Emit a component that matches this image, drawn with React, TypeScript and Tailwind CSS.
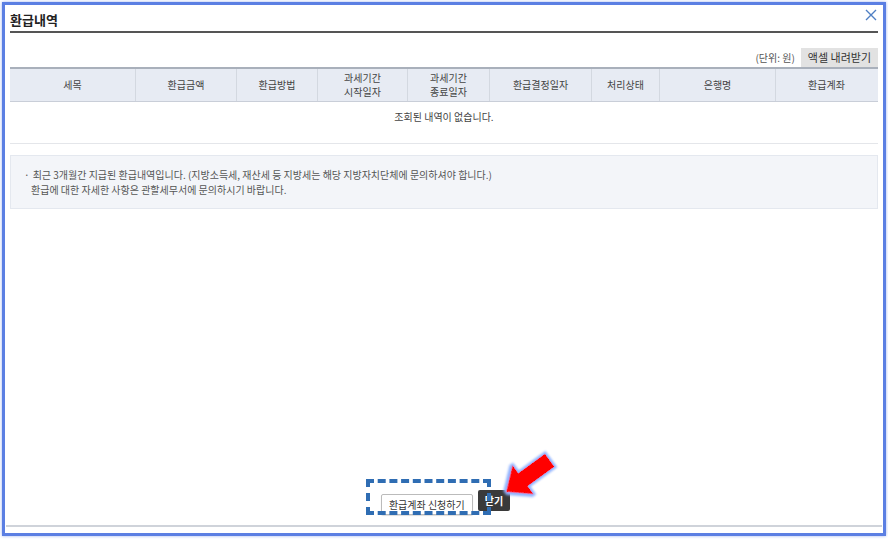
import React from 'react';

const columns: { label: string[]; width: string }[] = [
  { label: ['세목'], width: 'w-[126px]' },
  { label: ['환급금액'], width: 'w-[101px]' },
  { label: ['환급방법'], width: 'w-[81px]' },
  { label: ['과세기간', '시작일자'], width: 'w-[90px]' },
  { label: ['과세기간', '종료일자'], width: 'w-[82px]' },
  { label: ['환급결정일자'], width: 'w-[102px]' },
  { label: ['처리상태'], width: 'w-[68px]' },
  { label: ['은행명'], width: 'w-[116px]' },
  { label: ['환급계좌'], width: 'w-[101px]' },
];

const App: React.FC = () => {
  return (
    <div
      className="w-[888px] h-[540px] bg-white p-[2px] overflow-hidden"
      style={{ fontFamily: '"Noto Sans CJK KR", "Noto Sans", sans-serif' }}
    >
      <div className="relative flex flex-col h-[534px] w-[884px] border-[3px] border-[#5b7fe3] shadow-[0_0_3px_#9db3f0] bg-white">
        {/* Title */}
        <div className="flex items-center justify-between px-[5px] h-[26px]">
          <h1 className="text-[13px] font-bold text-[#222] leading-none pt-[2px]">환급내역</h1>
          <button className="-mt-[6px] mr-[1px]">
            <svg width="12" height="12" viewBox="0 0 12 12">
              <path d="M1 1 L11 11 M11 1 L1 11" stroke="#4f7fc4" strokeWidth="1.4" />
            </svg>
          </button>
        </div>
        <div className="mx-[5px] h-[2px] bg-[#555]" />

        <div className="mx-[5px] flex flex-col flex-1">
          {/* Unit + excel */}
          <div className="flex items-center justify-end gap-[6px] mt-[14px] h-[20px]">
            <span className="text-[10px] text-[#555]">(단위: 원)</span>
            <button className="h-[19px] px-[7px] bg-[#e2e2e2] text-[11px] text-[#333] leading-none">액셀 내려받기</button>
          </div>

          {/* Table */}
          <div className="border-t-2 border-[#a9b0bb]">
            <div className="flex h-[33px] bg-[#e7ebf3] border-b border-[#c9ced8]">
              {columns.map((c, i) => (
                <div
                  key={i}
                  className={`${c.width} flex flex-col items-center justify-center text-[10px] leading-[14px] text-[#444] ${i < columns.length - 1 ? 'border-r border-[#d3d8e0]' : ''}`}
                >
                  {c.label.map((l) => (
                    <span key={l} className="block">{l}</span>
                  ))}
                </div>
              ))}
            </div>
            <div className="h-[42px] flex items-center justify-center text-[10px] text-[#444] border-b border-[#e4e6ea] pb-[12px]">
              조회된 내역이 없습니다.
            </div>
          </div>

          {/* Notice */}
          <div className="mt-[11px] h-[54px] bg-[#f3f5f9] border border-[#e4e8ef] px-[13px] pt-[11px] text-[10px] leading-[15px] text-[#555]">
            <p>
              <span className="mr-[3px]">·</span>최근 3개월간 지급된 환급내역입니다. (지방소득세, 재산세 등 지방세는 해당 지방자치단체에 문의하셔야 합니다.)
            </p>
            <p className="pl-[7px]">환급에 대한 자세한 사항은 관할세무서에 문의하시기 바랍니다.</p>
          </div>

          <div className="flex-1" />

          {/* Buttons */}
          <div className="flex justify-center gap-[5px] mb-[10px] pl-[3px]">
            <div className="relative">
              <button className="h-[21px] px-[7px] bg-white border border-[#bbb] rounded-[2px] text-[10px] text-[#333] shadow-[0_1px_1px_#ddd]">
                환급계좌 신청하기
              </button>
              <div className="absolute left-[-15px] top-[-11px] w-[125px] h-[36px] border-[4px] border-dashed border-[#2f6db3]" />
            </div>
            <button className="h-[21px] px-[7px] bg-[#3a3a3a] rounded-[2px] text-[10px] font-bold text-white">닫기</button>
          </div>
          <div className="h-[2px] bg-[#cfd3da] mb-[6px] -mx-[4px]" />
        </div>

        {/* Red arrow annotation */}
        <svg
          className="absolute left-[494px] top-[442px]"
          width="60"
          height="52"
          viewBox="0 0 60 52"
        >
          <defs>
            <filter id="glow" x="-30%" y="-30%" width="160%" height="160%">
              <feMorphology in="SourceAlpha" operator="dilate" radius="1.5" result="d" />
              <feGaussianBlur in="d" stdDeviation="1.2" result="b" />
              <feFlood floodColor="#8fb2ff" />
              <feComposite operator="in" in2="b" />
              <feMerge>
                <feMergeNode />
                <feMergeNode in="SourceGraphic" />
              </feMerge>
            </filter>
          </defs>
          <g transform="translate(7,45) rotate(-36)" filter="url(#glow)">
            <path d="M0 0 L21 -18 L21 -8 L54 -8 L54 8 L21 8 L21 18 Z" fill="#ff0000" />
          </g>
        </svg>
      </div>
    </div>
  );
};

export default App;
